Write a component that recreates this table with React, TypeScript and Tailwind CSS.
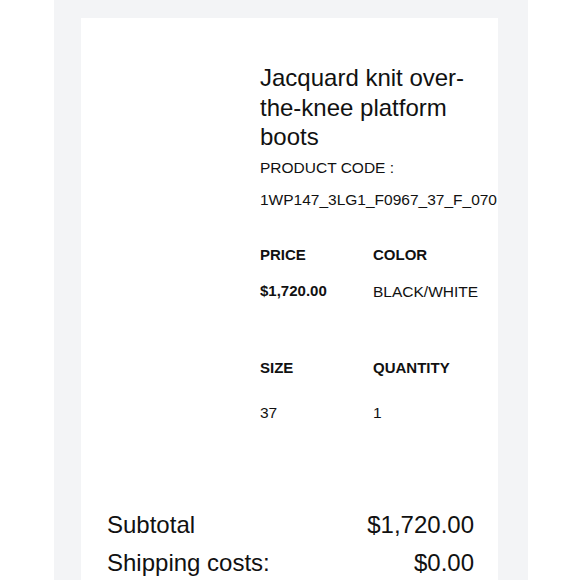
const item = {
  name: 'Jacquard knit over-the-knee platform boots',
  code: '1WP147_3LG1_F0967_37_F_070',
  price: '$1,720.00',
  color: 'BLACK/WHITE',
  size: '37',
  quantity: '1',
}

function Label({ children }: { children: React.ReactNode }) {
  return <p className="text-[15px] leading-[20px] font-bold">{children}</p>
}

export default function App() {
  return (
    <div
      className="h-[580px] overflow-hidden bg-white text-[#111]"
      style={{ fontFamily: '"Liberation Sans", Arial, sans-serif' }}
    >
      <div className="ml-[54px] w-[474px] h-full bg-[#f3f4f6] px-[27px] pt-[18px]">
        <div className="w-[417px] bg-white pl-[26px] pr-[24px] pt-[45px] pb-10">
          <div className="flex">
            {/* image placeholder */}
            <div className="w-[153px] shrink-0" />

            <div className="w-[214px]">
              <h1 className="text-[24px] leading-[29.5px]">{item.name}</h1>
              <p className="mt-[6px] text-[15.5px] leading-[20px]">PRODUCT CODE :</p>
              <p className="mt-[12px] text-[15.5px] leading-[20px] whitespace-nowrap">
                {item.code}
              </p>

              <div className="mt-[35px] grid grid-cols-[113px_1fr]">
                <Label>PRICE</Label>
                <Label>COLOR</Label>
                <p className="mt-[16px] text-[15px] leading-[20px] font-bold">
                  {item.price}
                </p>
                <p className="mt-[17px] text-[15.5px] leading-[20px]">{item.color}</p>
              </div>

              <div className="mt-[56px] grid grid-cols-[113px_1fr]">
                <Label>SIZE</Label>
                <Label>QUANTITY</Label>
                <p className="mt-[25px] text-[15.5px] leading-[20px]">{item.size}</p>
                <p className="mt-[25px] text-[15.5px] leading-[20px]">{item.quantity}</p>
              </div>
            </div>
          </div>

          <div className="mt-[83px] text-[24px] leading-[38px]">
            <div className="flex justify-between">
              <span>Subtotal</span>
              <span>{item.price}</span>
            </div>
            <div className="flex justify-between">
              <span>Shipping costs:</span>
              <span>$0.00</span>
            </div>
          </div>
        </div>
      </div>
    </div>
  )
}
